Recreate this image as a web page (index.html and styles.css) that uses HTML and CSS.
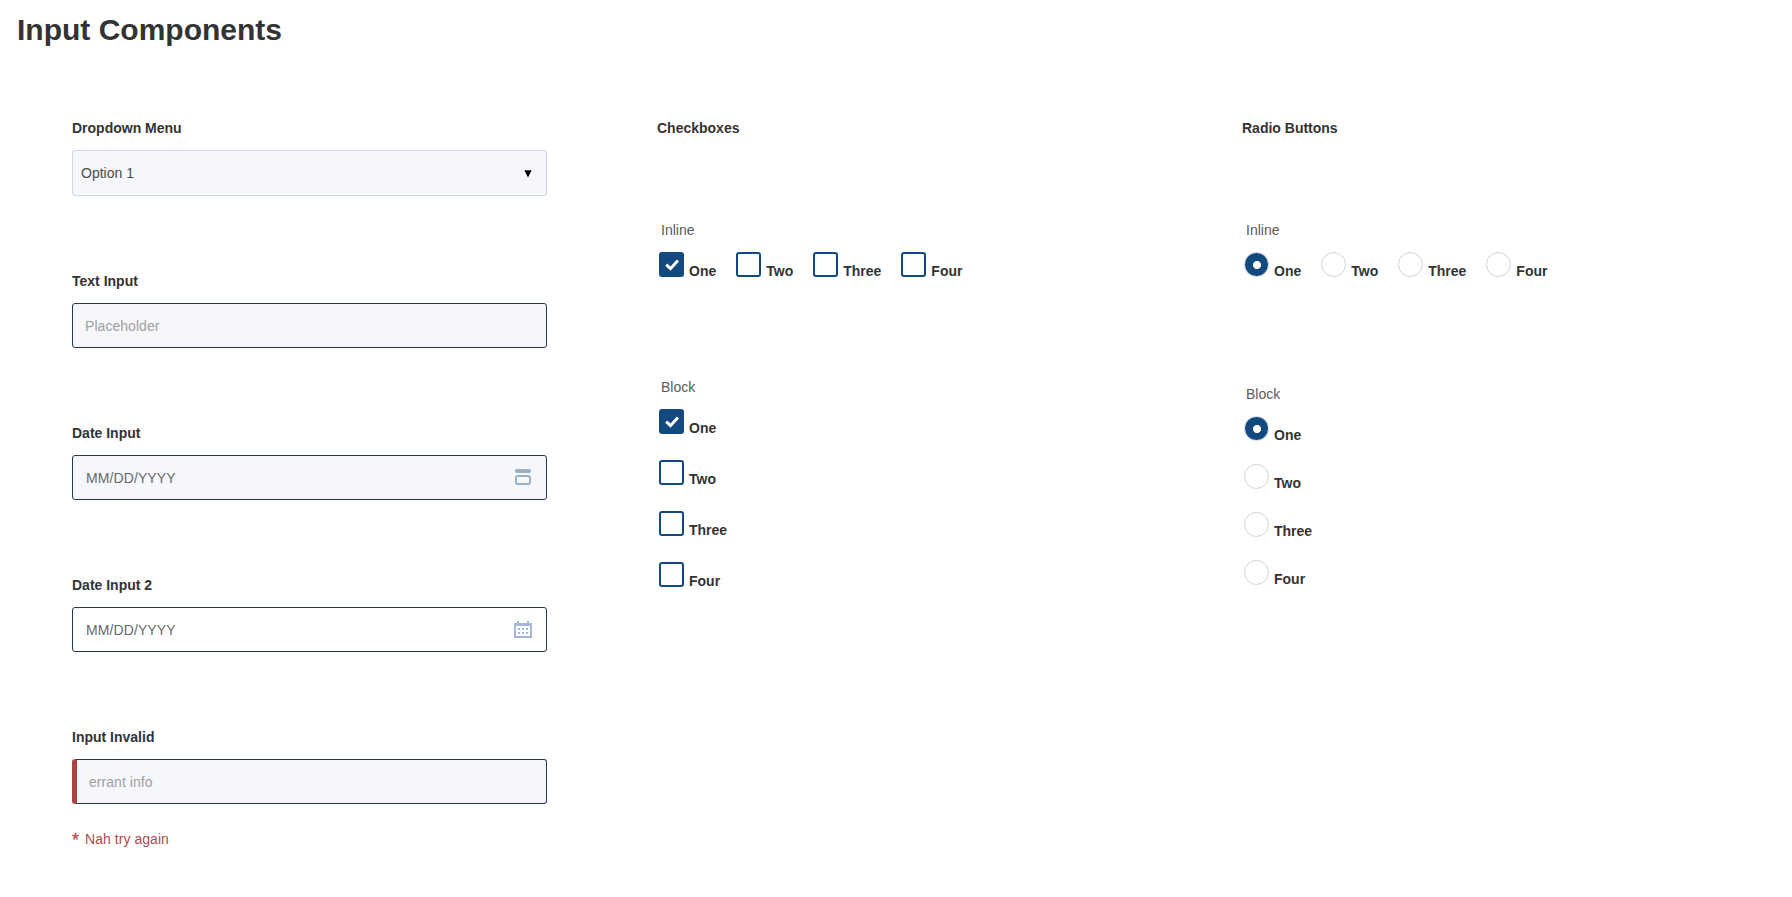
FILE: index.html
```html
<!DOCTYPE html>
<html lang="en">
<head>
<meta charset="utf-8">
<title>Input Components</title>
<link rel="stylesheet" href="styles.css">
</head>
<body>
<h1 class="title">Input Components</h1>
<main class="columns">
  <section class="fields">
    <div class="field">
      <div class="label">Dropdown Menu</div>
      <div class="control select"><span>Option 1</span><svg class="arrow" width="8" height="8" viewBox="0 0 8 8"><path d="M.4.3h7.2L4 7.5z"/></svg></div>
    </div>
    <div class="field">
      <div class="label">Text Input</div>
      <div class="control text"><span>Placeholder</span></div>
    </div>
    <div class="field">
      <div class="label">Date Input</div>
      <div class="control date"><span>MM/DD/YYYY</span>
        <svg class="icon bars" width="18" height="18" viewBox="0 0 18 18"><rect x="1" y="1" width="16" height="4" rx="1.8" fill="#9ab0c4"/><rect x="2" y="8" width="14" height="8" rx="1.8" fill="none" stroke="#9ab0c4" stroke-width="2"/></svg>
      </div>
    </div>
    <div class="field">
      <div class="label">Date Input 2</div>
      <div class="control date plain"><span>MM/DD/YYYY</span>
        <svg class="icon" width="18" height="17" viewBox="0 0 18 17" fill="#a4b7da"><path fill-rule="evenodd" d="M0 2h18v15H0zM2 5h14v10H2z"/><path d="M3 0h2v2H3zM13 0h2v2h-2zM4 7h2v2H4zM8 7h2v2H8zM12 7h2v2h-2zM4 11h2v2H4zM8 11h2v2H8zM12 11h2v2h-2z"/></svg>
      </div>
    </div>
    <div class="field">
      <div class="label">Input Invalid</div>
      <div class="control text invalid"><span>errant info</span></div>
      <div class="error"><span class="star">*</span><span>Nah try again</span></div>
    </div>
  </section>

  <section class="choices">
    <div class="label">Checkboxes</div>
    <div class="caption">Inline</div>
    <div class="options inline">
      <div class="option"><span class="box checked"><svg width="25" height="25" viewBox="0 0 25 25"><path d="M7.2 12.7l4.3 4 7.4-8.2"/></svg></span><span class="name">One</span></div>
      <div class="option"><span class="box"></span><span class="name">Two</span></div>
      <div class="option"><span class="box"></span><span class="name">Three</span></div>
      <div class="option"><span class="box"></span><span class="name">Four</span></div>
    </div>
    <div class="caption second">Block</div>
    <div class="options block">
      <div class="option"><span class="box checked"><svg width="25" height="25" viewBox="0 0 25 25"><path d="M7.2 12.7l4.3 4 7.4-8.2"/></svg></span><span class="name">One</span></div>
      <div class="option"><span class="box"></span><span class="name">Two</span></div>
      <div class="option"><span class="box"></span><span class="name">Three</span></div>
      <div class="option"><span class="box"></span><span class="name">Four</span></div>
    </div>
  </section>

  <section class="choices radios">
    <div class="label">Radio Buttons</div>
    <div class="caption">Inline</div>
    <div class="options inline">
      <div class="option"><span class="radio selected"></span><span class="name">One</span></div>
      <div class="option"><span class="radio"></span><span class="name">Two</span></div>
      <div class="option"><span class="radio"></span><span class="name">Three</span></div>
      <div class="option"><span class="radio"></span><span class="name">Four</span></div>
    </div>
    <div class="caption second">Block</div>
    <div class="options block">
      <div class="option"><span class="radio selected"></span><span class="name">One</span></div>
      <div class="option"><span class="radio"></span><span class="name">Two</span></div>
      <div class="option"><span class="radio"></span><span class="name">Three</span></div>
      <div class="option"><span class="radio"></span><span class="name">Four</span></div>
    </div>
  </section>
</main>
</body>
</html>
```
FILE: styles.css
```css
* { box-sizing: border-box; }
body {
  margin: 0;
  background: #fff;
  color: #333;
  font: 14px/16px "Liberation Sans", Arial, sans-serif;
}
.title {
  margin: 0;
  padding: 13px 17px 0;
  font-size: 30px;
  line-height: 34px;
  font-weight: 700;
}
.columns {
  display: grid;
  grid-template-columns: repeat(3, 475px);
  column-gap: 110px;
  padding: 73px 0 0 72px;
}
.fields { display: flex; flex-direction: column; gap: 77px; }
.label { font-weight: 700; }
.control {
  display: flex;
  align-items: flex-start;
  justify-content: space-between;
  height: 45px;
  margin-top: 14px;
  padding: 14px 14px 0 12px;
  background: #f6f7fa;
  border: 1px solid #263850;
  border-radius: 3px;
}
.select { height: 46px; padding-left: 8px; border-color: #cfd9e5; color: #4a4a4a; }
.arrow { margin: 5px 0 0; fill: #000; }
.text { color: #9f9f9f; letter-spacing: .05px; }
.date { padding-left: 13px; color: #686868; letter-spacing: .1px; }
.plain { background: #fff; }
.icon { margin-top: -1px; }
.bars { margin-top: -2px; }
.invalid { border-left: 5px solid #a94442; }
.error { display: flex; margin-top: 27px; color: #b04b4b; letter-spacing: .05px; }
.star { width: 13px; font-size: 18px; line-height: 18px; -webkit-text-stroke: .3px #b04b4b; }

.caption { margin-top: 86px; padding-left: 4px; color: #5a5a5a; }
.caption.second { margin-top: 100px; }
.options { display: flex; margin: 14px 0 0 2px; }
.inline { column-gap: 20px; }
.block { flex-direction: column; row-gap: 24px; }
.option { display: flex; gap: 5px; height: 27px; }
.name { padding-top: 11px; font-weight: 700; }
.box {
  flex: none;
  width: 25px;
  height: 25px;
  border: 2px solid #12497f;
  border-radius: 3px;
}
.box.checked { border: 0; background: #12497f; }
.box svg { display: block; fill: none; stroke: #fff; stroke-width: 3; }
.radio {
  flex: none;
  width: 25px;
  height: 25px;
  border: 1px solid #cbd6e3;
  border-radius: 50%;
}
.radio.selected {
  background: radial-gradient(circle at 12px 12px, #fff 3.7px, #12497f 4.4px);
}
.radios .caption.second { margin-top: 107px; }
.radios .block { row-gap: 21px; }
```
